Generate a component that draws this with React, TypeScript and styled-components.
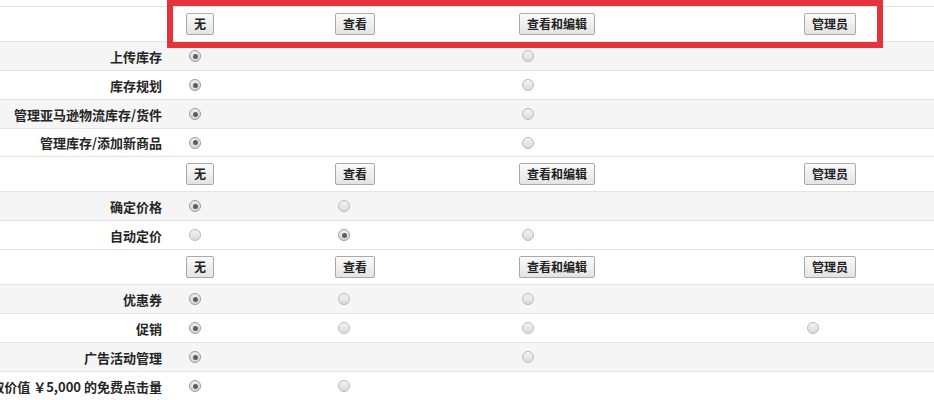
import React from "react";
import styled, { createGlobalStyle } from "styled-components";

const Global = createGlobalStyle`
  html, body { margin: 0; padding: 0; background: #fff; }
  body { font-family: "Noto Sans CJK SC", "Liberation Sans", sans-serif; overflow: hidden; }
`;

const Page = styled.div`
  position: relative;
  width: 934px;
`;

const Row = styled.div<{ $shaded?: boolean; $h: number }>`
  display: grid;
  grid-template-columns: 180px 149px 184px 285px 1fr;
  align-items: center;
  height: ${(p) => p.$h}px;
  box-sizing: border-box;
  border-bottom: 1px solid #e4e4e4;
  background: ${(p) => (p.$shaded ? "#f5f5f5" : "#ffffff")};
`;

const Label = styled.div`
  display: flex;
  justify-content: flex-end;
  padding-right: 18px;
  white-space: nowrap;
  font-size: 13px;
  font-weight: 700;
  color: #262626;
  line-height: 1;
`;

const Cell = styled.div`
  display: flex;
  align-items: center;
  padding-left: 6px;
`;

const Btn = styled.button`
  height: 22px;
  padding: 0 7px;
  border: 1px solid #a9a9a9;
  border-radius: 2px;
  background: linear-gradient(#fafafa, #e4e4e4);
  box-shadow: inset 0 1px 0 #fff;
  font-family: "Noto Sans CJK SC", sans-serif;
  font-size: 12px;
  font-weight: 700;
  color: #222;
  line-height: 1;
  cursor: pointer;
`;

const Radio = styled.span<{ $checked?: boolean }>`
  position: relative;
  display: inline-block;
  width: 12px;
  height: 12px;
  margin-left: 3px;
  box-sizing: border-box;
  border-radius: 50%;
  border: 1px solid ${(p) => (p.$checked ? "#9a9a9a" : "#b9b9b9")};
  background: ${(p) =>
    p.$checked ? "linear-gradient(#eeeeee, #d6d6d6)" : "linear-gradient(#f4f4f4, #dadada)"};
  &::after {
    content: "";
    display: ${(p) => (p.$checked ? "block" : "none")};
    position: absolute;
    left: 2.5px;
    top: 2.5px;
    width: 5px;
    height: 5px;
    border-radius: 50%;
    background: #5e5e5e;
  }
`;

const Highlight = styled.div`
  position: absolute;
  left: 167px;
  top: 0;
  width: 716px;
  height: 48px;
  box-sizing: border-box;
  border: 6px solid #e5333b;
  pointer-events: none;
`;

type R = "on" | "off" | null;

const ButtonRow = () => (
  <Row $h={35}>
    <Label />
    <Cell><Btn>无</Btn></Cell>
    <Cell><Btn>查看</Btn></Cell>
    <Cell><Btn>查看和编辑</Btn></Cell>
    <Cell><Btn>管理员</Btn></Cell>
  </Row>
);

const OptionRow = ({ label, cols, shaded, h }: { label: string; cols: R[]; shaded?: boolean; h: number }) => (
  <Row $h={h} $shaded={shaded}>
    <Label>{label}</Label>
    {[0, 1, 2, 3].map((i) => (
      <Cell key={i}>{cols[i] ? <Radio $checked={cols[i] === "on"} /> : null}</Cell>
    ))}
  </Row>
);

const sections: { label: string; cols: R[]; h: number }[][] = [
  [
    { label: "上传库存", cols: ["on", null, "off", null], h: 29 },
    { label: "库存规划", cols: ["on", null, "off", null], h: 29 },
    { label: "管理亚马逊物流库存/货件", cols: ["on", null, "off", null], h: 29 },
    { label: "管理库存/添加新商品", cols: ["on", null, "off", null], h: 28 },
  ],
  [
    { label: "确定价格", cols: ["on", "off", null, null], h: 29 },
    { label: "自动定价", cols: ["off", "on", "off", null], h: 29 },
  ],
  [
    { label: "优惠券", cols: ["on", "off", "off", null], h: 29 },
    { label: "促销", cols: ["on", "off", "off", "off"], h: 29 },
    { label: "广告活动管理", cols: ["on", null, "off", null], h: 29 },
    { label: "领取价值 ￥5,000 的免费点击量", cols: ["on", "off", null, null], h: 29 },
  ],
];

export default function App() {
  return (
    <Page>
      <Global />
      <Row $h={7} />
      {sections.map((sec, si) => (
        <React.Fragment key={si}>
          <ButtonRow />
          {sec.map((r, i) => (
            <OptionRow key={r.label} label={r.label} cols={r.cols} h={r.h} shaded={i % 2 === 0} />
          ))}
        </React.Fragment>
      ))}
      <Highlight />
    </Page>
  );
}
